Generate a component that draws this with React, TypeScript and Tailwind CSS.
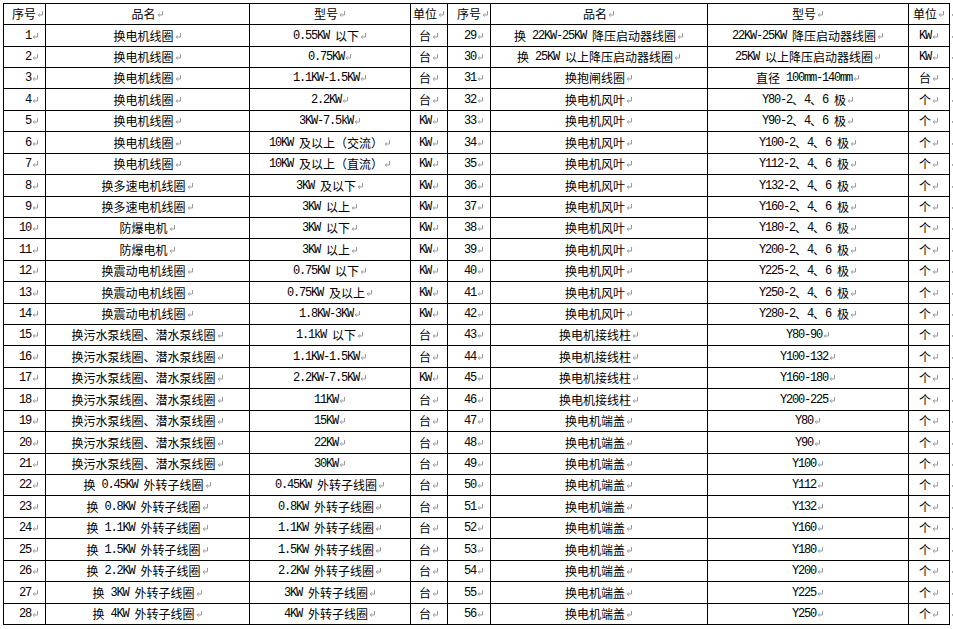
import React from "react";

const Mark = () => (
  <svg width="7" height="8" viewBox="0 0 7 8" className="inline-block shrink-0 ml-px align-[-1px]">
    <path d="M5.5 1V5H1.2M2.8 3.4L1.2 5L2.8 6.6" stroke="#9a9a9a" strokeWidth="1" fill="none" />
  </svg>
);

const Txt = ({ s }: { s: string }) => {
  const parts = s.split(/([\x20-\x7e]+)/).filter((p) => p.length > 0);
  return (
    <span className="whitespace-nowrap inline-flex items-center">
      {parts.map((p, i) =>
        /^[\x20-\x7e]+$/.test(p) ? (
          <span key={i} className="font-['Liberation_Mono',monospace] tracking-[-1.2px] whitespace-pre">
            {p}
          </span>
        ) : (
          <span key={i}>{p}</span>
        )
      )}
      <Mark />
    </span>
  );
};

const pump = "换污水泵线圈、潜水泵线圈";
const left: [string, string, string][] = [
  ["换电机线圈", "0.55KW 以下", "台"],
  ["换电机线圈", "0.75KW", "台"],
  ["换电机线圈", "1.1KW-1.5KW", "台"],
  ["换电机线圈", "2.2KW", "台"],
  ["换电机线圈", "3KW-7.5kW", "KW"],
  ["换电机线圈", "10KW 及以上（交流）", "KW"],
  ["换电机线圈", "10KW 及以上（直流）", "KW"],
  ["换多速电机线圈", "3KW 及以下", "KW"],
  ["换多速电机线圈", "3KW 以上", "KW"],
  ["防爆电机", "3KW 以下", "KW"],
  ["防爆电机", "3KW 以上", "KW"],
  ["换震动电机线圈", "0.75KW 以下", "KW"],
  ["换震动电机线圈", "0.75KW 及以上", "KW"],
  ["换震动电机线圈", "1.8KW-3KW", "KW"],
  [pump, "1.1kW 以下", "台"],
  [pump, "1.1KW-1.5KW", "台"],
  [pump, "2.2KW-7.5KW", "KW"],
  [pump, "11KW", "台"],
  [pump, "15KW", "台"],
  [pump, "22KW", "台"],
  [pump, "30KW", "台"],
  ["换 0.45KW 外转子线圈", "0.45KW 外转子线圈", "台"],
  ["换 0.8KW 外转子线圈", "0.8KW 外转子线圈", "台"],
  ["换 1.1KW 外转子线圈", "1.1KW 外转子线圈", "台"],
  ["换 1.5KW 外转子线圈", "1.5KW 外转子线圈", "台"],
  ["换 2.2KW 外转子线圈", "2.2KW 外转子线圈", "台"],
  ["换 3KW 外转子线圈", "3KW 外转子线圈", "台"],
  ["换 4KW 外转子线圈", "4KW 外转子线圈", "台"],
];

const fan = (y: string) => `${y}-2、4、6 极`;
const right: [string, string, string][] = [
  ["换 22KW-25KW 降压启动器线圈", "22KW-25KW 降压启动器线圈", "KW"],
  ["换 25KW 以上降压启动器线圈", "25KW 以上降压启动器线圈", "KW"],
  ["换抱闸线圈", "直径 100mm-140mm", "台"],
  ...["Y80", "Y90", "Y100", "Y112", "Y132", "Y160", "Y180", "Y200", "Y225", "Y250", "Y280"].map(
    (y) => ["换电机风叶", fan(y), "个"] as [string, string, string]
  ),
  ...["Y80-90", "Y100-132", "Y160-180", "Y200-225"].map(
    (y) => ["换电机接线柱", y, "个"] as [string, string, string]
  ),
  ...["Y80", "Y90", "Y100", "Y112", "Y132", "Y160", "Y180", "Y200", "Y225", "Y250"].map(
    (y) => ["换电机端盖", y, "个"] as [string, string, string]
  ),
];

const C = ({ s, align = "center" }: { s: string; align?: "center" | "right" | "headnum" }) => (
  <div
    className={
      align === "right"
        ? "bg-white flex items-center justify-end pr-[6px] overflow-hidden"
        : align === "headnum"
        ? "bg-white flex items-center justify-end pr-[1px] overflow-hidden"
        : "bg-white flex items-center justify-center overflow-hidden"
    }
  >
    <Txt s={s} />
  </div>
);

export default function App() {
  const rows = left.map((l, i) => ({ n1: String(i + 1), l, n2: String(i + 29), r: right[i] }));
  return (
    <div className="w-[953px] h-[629px] overflow-hidden bg-white text-black text-[12px] leading-none font-['Noto_Sans_CJK_SC',sans-serif]">
      <div className="flex pt-[3px] pl-[3px]">
        <div className="grid shrink-0 bg-black p-px gap-px grid-cols-[41px_203px_160px_36px_42px_216px_200px_40px] grid-rows-[20px_21px_20px_20px_21px_20px_21px_20px_21px_20px_20px_21px_20px_21px_20px_20px_21px_20px_21px_20px_21px_20px_20px_21px_20px_21px_20px_21px_20px]">
          <C s="序号" align="headnum" />
          <C s="品名" />
          <C s="型号" />
          <C s="单位" />
          <C s="序号" align="headnum" />
          <C s="品名" />
          <C s="型号" />
          <C s="单位" />
          {rows.map((r) => (
            <React.Fragment key={r.n1}>
              <C s={r.n1} align="right" />
              <C s={r.l[0]} />
              <C s={r.l[1]} />
              <C s={r.l[2]} />
              <C s={r.n2} align="right" />
              <C s={r.r[0]} />
              <C s={r.r[1]} />
              <C s={r.r[2]} />
            </React.Fragment>
          ))}
        </div>
        <div className="grid shrink-0 py-px gap-px grid-rows-[20px_21px_20px_20px_21px_20px_21px_20px_21px_20px_20px_21px_20px_21px_20px_20px_21px_20px_21px_20px_21px_20px_20px_21px_20px_21px_20px_21px_20px]">
          {Array.from({ length: 29 }).map((_, i) => (
            <div key={i} className="flex items-center">
              <Mark />
            </div>
          ))}
        </div>
      </div>
    </div>
  );
}
